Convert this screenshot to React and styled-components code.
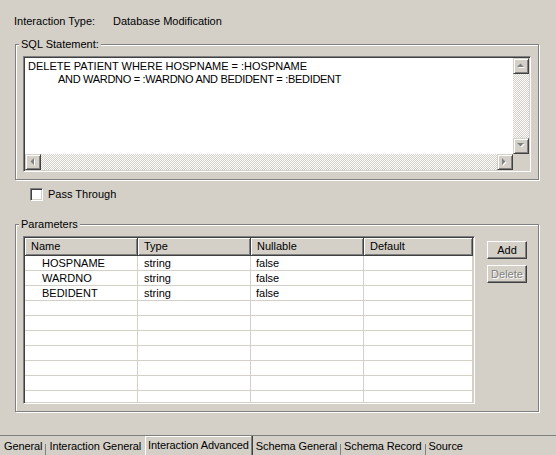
import React from 'react';
import styled, { createGlobalStyle, css } from 'styled-components';

const GlobalStyle = createGlobalStyle`
  html, body {
    margin: 0;
    padding: 0;
    background: #d4d0c8;
  }
  body {
    font-family: "Liberation Sans", Arial, sans-serif;
    font-size: 11px;
    color: #000;
  }
`;

const Window = styled.div`
  width: 556px;
  height: 455px;
  display: flex;
  flex-direction: column;
  overflow: hidden;
`;

const Content = styled.div`
  flex: 1;
  padding-top: 15px;
  display: flex;
  flex-direction: column;
`;

const InfoRow = styled.div`
  display: flex;
  padding-left: 14px;
  line-height: 13px;
`;

const InfoLabel = styled.span`
  width: 99px;
`;

const Group = styled.fieldset`
  margin: ${p => p.$top}px 17px 0 15px;
  padding: 5px ${p => p.$right}px ${p => p.$bottom}px 7px;
  border: 1px solid #808080;
  box-shadow: 1px 1px 0 #fff, inset 1px 1px 0 #fff;
  min-width: 0;
`;

const Legend = styled.legend`
  margin-left: -4px;
  padding: 0 2px;
  line-height: 13px;
  background: #d4d0c8;
`;

const sunken = css`
  box-sizing: border-box;
  border: 1px solid;
  border-color: #808080 #fff #fff #808080;
  box-shadow: inset 1px 1px 0 #404040, inset -1px -1px 0 #d4d0c8;
  padding: 1px;
  background: #fff;
`;

const Editor = styled.div`
  ${sunken}
  height: 116px;
  display: grid;
  grid-template-columns: 1fr 16px;
  grid-template-rows: 1fr 16px;
`;

const SqlText = styled.div`
  padding: 2px 3px;
  line-height: 13px;
  white-space: pre;
  overflow: hidden;
`;

const SqlLine = styled.div`
  padding-left: ${p => p.$indent || 0}px;
  letter-spacing: ${p => (p.$indent ? '-0.3px' : '0')};
`;

const dither = css`
  background-color: #d4d0c8;
  background-image: conic-gradient(#fff 25%, #d4d0c8 0 50%, #fff 0 75%, #d4d0c8 0);
  background-size: 2px 2px;
`;

const VScroll = styled.div`
  display: flex;
  flex-direction: column;
`;

const HScroll = styled.div`
  display: flex;
`;

const Track = styled.div`
  flex: 1;
  ${dither}
`;

const Corner = styled.div`
  background: #d4d0c8;
`;

const ScrollButton = styled.div`
  width: 16px;
  height: 16px;
  box-sizing: border-box;
  background: #d4d0c8;
  border: 1px solid;
  border-color: #d4d0c8 #404040 #404040 #d4d0c8;
  box-shadow: inset 1px 1px 0 #fff, inset -1px -1px 0 #808080;
  display: flex;
  align-items: center;
  justify-content: center;
`;

const arrows = {
  up: { w: 8, h: 5, pts: '0,4 7,4 3.5,0.5' },
  down: { w: 8, h: 5, pts: '0,0 7,0 3.5,3.5' },
  left: { w: 5, h: 8, pts: '4,0 4,7 0.5,3.5' },
  right: { w: 5, h: 8, pts: '0,0 0,7 3.5,3.5' },
};

const Arrow = ({ dir }) => {
  const a = arrows[dir];
  return (
    <svg width={a.w + 1} height={a.h + 1} viewBox={`0 0 ${a.w + 1} ${a.h + 1}`}>
      <polygon points={a.pts} fill="#fff" transform="translate(1 1)" />
      <polygon points={a.pts} fill="#808080" />
    </svg>
  );
};

const CheckRow = styled.label`
  display: flex;
  align-items: center;
  gap: 5px;
  margin: 8px 0 0 30px;
  line-height: 13px;
`;

const CheckBox = styled.span`
  ${sunken}
  width: 13px;
  height: 13px;
`;

const ParamsBody = styled.div`
  display: flex;
  align-items: flex-start;
`;

const Table = styled.div`
  ${sunken}
  flex: 1;
  height: 168px;
  overflow: hidden;
`;

const Row = styled.div`
  display: grid;
  grid-template-columns: 113px 113px 113px 1fr;
`;

const HeaderCell = styled.div`
  height: 18px;
  box-sizing: border-box;
  background: #d4d0c8;
  border-right: 1px solid #404040;
  border-bottom: 1px solid #404040;
  box-shadow: inset 1px 1px 0 #fff, inset -1px -1px 0 #808080;
  padding-left: 6px;
  line-height: 17px;
`;

const Cell = styled.div`
  height: 15px;
  box-sizing: border-box;
  border-right: 1px solid #d4d0c8;
  border-bottom: 1px solid #d4d0c8;
  padding-left: ${p => p.$indent || 6}px;
  line-height: 15px;
  white-space: nowrap;
`;

const ButtonColumn = styled.div`
  display: flex;
  flex-direction: column;
  gap: 6px;
  margin: 5px 0 0 12px;
`;

const Button = styled.button`
  width: 40px;
  height: 18px;
  box-sizing: border-box;
  padding: 0;
  font: inherit;
  color: ${p => (p.disabled ? '#808080' : '#000')};
  text-shadow: ${p => (p.disabled ? '1px 1px 0 #fff' : 'none')};
  background: #d4d0c8;
  border: 1px solid;
  border-color: #fff #404040 #404040 #fff;
  box-shadow: inset -1px -1px 0 #808080;
`;

const TabBar = styled.div`
  height: 20px;
  box-sizing: border-box;
  border-top: 1px solid #808080;
  display: flex;
  padding-left: 1px;
`;

const Tab = styled.div`
  padding: 4px 3px 0 3px;
  line-height: 13px;
  white-space: nowrap;
  letter-spacing: -0.1px;
  ${p => p.$active && css`
    margin-left: 1px;
    padding: 3px 3px 0 2px;
    border-left: 1px solid #fff;
    border-right: 1px solid #404040;
    box-shadow: inset -1px 0 0 #808080, inset 0 1px 0 #fff;
  `}
`;

const TabSep = styled.span`
  width: 1px;
  height: 11px;
  align-self: flex-end;
  background: #808080;
`;

const params = [
  ['HOSPNAME', 'string', 'false', ''],
  ['WARDNO', 'string', 'false', ''],
  ['BEDIDENT', 'string', 'false', ''],
];

const rows = [...params, ...Array(7).fill(['', '', '', ''])];

export default function App() {
  return (
    <Window>
      <GlobalStyle />
      <Content>
        <InfoRow>
          <InfoLabel>Interaction Type:</InfoLabel>
          <span>Database Modification</span>
        </InfoRow>

        <Group $top={10} $right={7} $bottom={7}>
          <Legend>SQL Statement:</Legend>
          <Editor>
            <SqlText>
              <SqlLine>DELETE PATIENT WHERE HOSPNAME = :HOSPNAME</SqlLine>
              <SqlLine $indent={30}>AND WARDNO = :WARDNO AND BEDIDENT = :BEDIDENT</SqlLine>
            </SqlText>
            <VScroll>
              <ScrollButton><Arrow dir="up" /></ScrollButton>
              <Track />
              <ScrollButton><Arrow dir="down" /></ScrollButton>
            </VScroll>
            <HScroll>
              <ScrollButton><Arrow dir="left" /></ScrollButton>
              <Track />
              <ScrollButton><Arrow dir="right" /></ScrollButton>
            </HScroll>
            <Corner />
          </Editor>
        </Group>

        <CheckRow>
          <CheckBox />
          Pass Through
        </CheckRow>

        <Group $top={17} $right={11} $bottom={7}>
          <Legend>Parameters</Legend>
          <ParamsBody>
            <Table>
              <Row>
                <HeaderCell>Name</HeaderCell>
                <HeaderCell>Type</HeaderCell>
                <HeaderCell>Nullable</HeaderCell>
                <HeaderCell>Default</HeaderCell>
              </Row>
              {rows.map((r, i) => (
                <Row key={i}>
                  <Cell $indent={17}>{r[0]}</Cell>
                  <Cell>{r[1]}</Cell>
                  <Cell $indent={5}>{r[2]}</Cell>
                  <Cell>{r[3]}</Cell>
                </Row>
              ))}
            </Table>
            <ButtonColumn>
              <Button>Add</Button>
              <Button disabled>Delete</Button>
            </ButtonColumn>
          </ParamsBody>
        </Group>
      </Content>

      <TabBar>
        <Tab>General</Tab>
        <TabSep />
        <Tab>Interaction General</Tab>
        <Tab $active>Interaction Advanced</Tab>
        <Tab>Schema General</Tab>
        <TabSep />
        <Tab>Schema Record</Tab>
        <TabSep />
        <Tab>Source</Tab>
      </TabBar>
    </Window>
  );
}
